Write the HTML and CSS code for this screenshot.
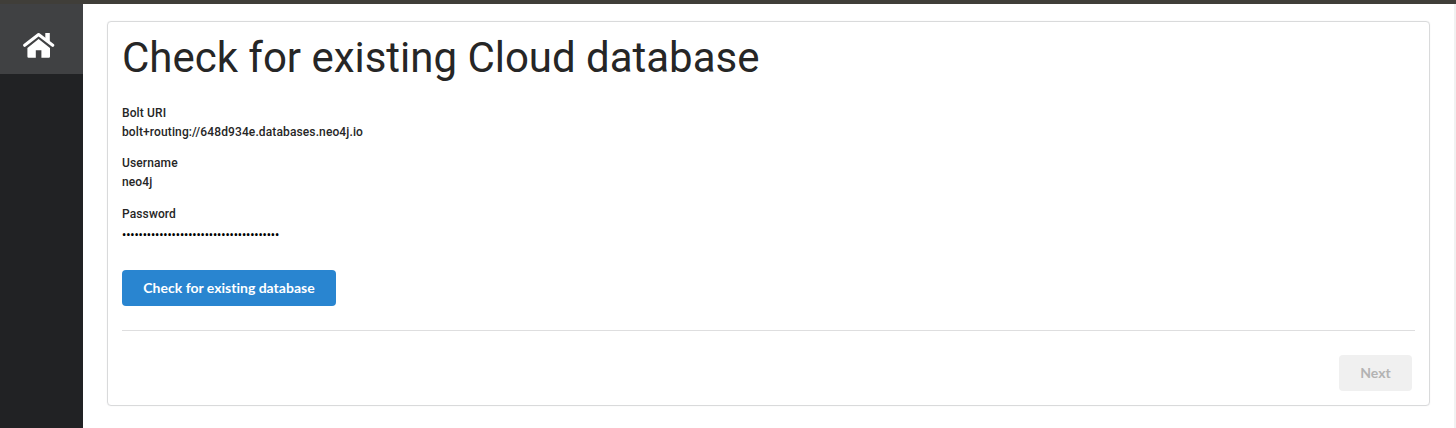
FILE: index.html
```html
<!DOCTYPE html>
<html lang="en">
<head>
<meta charset="utf-8">
<title>Check for existing Cloud database</title>
<link rel="stylesheet" href="styles.css">
</head>
<body>
<div class="app">
  <nav class="sidebar">
    <a class="nav-item" aria-label="Home">
      <svg class="home-icon" viewBox="0 0 32 26" width="32" height="26">
        <path fill="none" stroke="#fff" stroke-width="3.1" stroke-linecap="round" stroke-linejoin="round" d="M1.700 13.300 15.600 2.500 29.700 13.300"/>
        <path fill="#fff" d="M22.300 1h4.500v9.500l-4.500-3.500zM15.600 6.900 27 15.900v8.700a1.200 1.200 0 0 1-1.200 1.200H18.400v-7.600h-5.600v7.600H5.600a1.200 1.200 0 0 1-1.200-1.200v-8.700z"/>
      </svg>
    </a>
  </nav>
  <main class="content">
    <section class="card">
      <h1 class="title">Check for existing Cloud database</h1>
      <dl class="fields">
        <div class="field"><dt>Bolt URI</dt><dd>bolt+routing://648d934e.databases.neo4j.io</dd></div>
        <div class="field"><dt>Username</dt><dd>neo4j</dd></div>
        <div class="field"><dt>Password</dt><dd class="password">••••••••••••••••••••••••••••••••••••••</dd></div>
      </dl>
      <button class="button primary">Check for existing database</button>
      <div class="actions"><button class="button next" disabled>Next</button></div>
    </section>
  </main>
</div>
</body>
</html>
```
FILE: styles.css
```css
* { box-sizing: border-box; }
body { margin: 0; background: #fff; color: #262626; font-family: Roboto, "Liberation Sans", sans-serif; }
.app { display: flex; height: 428px; border-top: 4px solid #403e39; overflow: hidden; }
.sidebar { width: 83px; flex: none; background: #212224; }
.nav-item { display: flex; height: 70px; padding: 28px 0 0 23px; background: #404143; }
.home-icon { display: block; }
.content { flex: 1; padding: 17px 24px 0; border-right: 2px solid #f1f1f1; }
.card { height: 385px; padding: 0 14px; border: 1px solid #d9dadb; border-radius: 4px; box-shadow: 0 0 1px rgba(34, 36, 38, .12); }
.title { margin: 9px 0 20px; font-size: 42px; line-height: 53px; font-weight: 400; letter-spacing: -.02px; white-space: nowrap; }
.fields { margin: 0; height: 166px; font-size: 12px; line-height: 19px; font-weight: 500; letter-spacing: .12px; }
.field { height: 50.3px; }
.field dt, .field dd { margin: 0; }
.field .password { padding-top: 2px; color: #000; letter-spacing: -.06px; }
.button { display: block; height: 36px; padding: 0 21px; border: 0; border-radius: 4px; font: 700 14px/36px Lato, sans-serif; font-variant-ligatures: none; white-space: nowrap; }
.primary { width: 214px; background: #2985d0; color: #fff; }
.actions { display: flex; justify-content: flex-end; margin-top: 24px; padding: 24px 3px 0 0; border-top: 1px solid #dededf; }
.next { width: 73px; background: #f0f0f0; color: #b3b3b3; }
```
